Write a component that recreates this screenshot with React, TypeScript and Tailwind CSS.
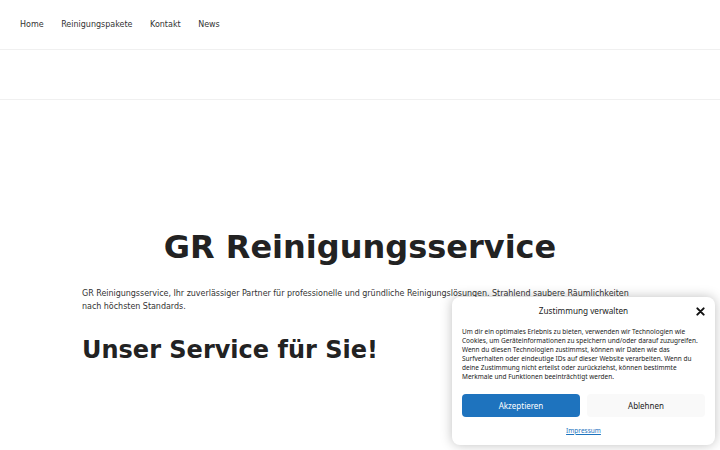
import React from "react";

export default function App() {
  const dv = { fontFamily: '"DejaVu Sans", sans-serif' };
  const ns = { fontFamily: '"Noto Sans", sans-serif' };
  return (
    <div className="relative w-[720px] h-[450px] overflow-hidden bg-white text-[#222]" style={dv}>
      <header className="h-[50px] border-b border-[#f0f0f0] flex items-center px-[20px]">
        <nav className="flex gap-[17.5px] text-[8px] text-[#333]">
          <span>Home</span>
          <span>Reinigungspakete</span>
          <span>Kontakt</span>
          <span>News</span>
        </nav>
      </header>
      <div className="h-[50px] border-b border-[#f0f0f0]" />
      <main className="px-[82px]">
        <h1 className="mt-[127px] text-center font-bold text-[32px] leading-[40px] text-[#222]">GR Reinigungsservice</h1>
        <p className="mt-[20px] text-[8px] tracking-[-0.03px] leading-[13px] text-[#333]">
          GR Reinigungsservice, Ihr zuverlässiger Partner für professionelle und gründliche Reinigungslösungen. Strahlend saubere Räumlichkeiten nach höchsten Standards.
        </p>
        <h2 className="mt-[22px] font-bold text-[24px] leading-[30px] text-[#222]">Unser Service für Sie!</h2>
      </main>
      <div className="absolute left-[452px] top-[297px] w-[263px] h-[148px] bg-white rounded-[8px] shadow-[0_0_12px_rgba(0,0,0,0.25)] px-[10px] pt-[7px]" style={ns}>
        <div className="relative flex justify-center items-center h-[14px]">
          <span className="text-[8.2px] text-[#222]">Zustimmung verwalten</span>
          <svg className="absolute right-[0px] top-[3px]" width="9" height="9" viewBox="0 0 10 10">
            <path d="M1.5 1.5 L8.5 8.5 M8.5 1.5 L1.5 8.5" stroke="#111" strokeWidth="2.2" strokeLinecap="round" />
          </svg>
        </div>
        <p className="mt-[9px] text-[6.5px] leading-[9px] text-[#222]">
          Um dir ein optimales Erlebnis zu bieten, verwenden wir Technologien wie Cookies, um Geräteinformationen zu speichern und/oder darauf zuzugreifen. Wenn du diesen Technologien zustimmst, können wir Daten wie das Surfverhalten oder eindeutige IDs auf dieser Website verarbeiten. Wenn du deine Zustimmung nicht erteilst oder zurückziehst, können bestimmte Merkmale und Funktionen beeinträchtigt werden.
        </p>
        <div className="mt-[13px] flex gap-[7px]">
          <button className="w-[119px] h-[23px] rounded-[4px] bg-[#1e73be] text-white text-[8px]">Akzeptieren</button>
          <button className="w-[119px] h-[23px] rounded-[4px] bg-[#f9f9f9] text-[#222] text-[8px]">Ablehnen</button>
        </div>
        <div className="mt-[5px] text-center leading-[10px]">
          <span className="text-[6.5px] text-[#1e73be] underline">Impressum</span>
        </div>
      </div>
    </div>
  );
}
